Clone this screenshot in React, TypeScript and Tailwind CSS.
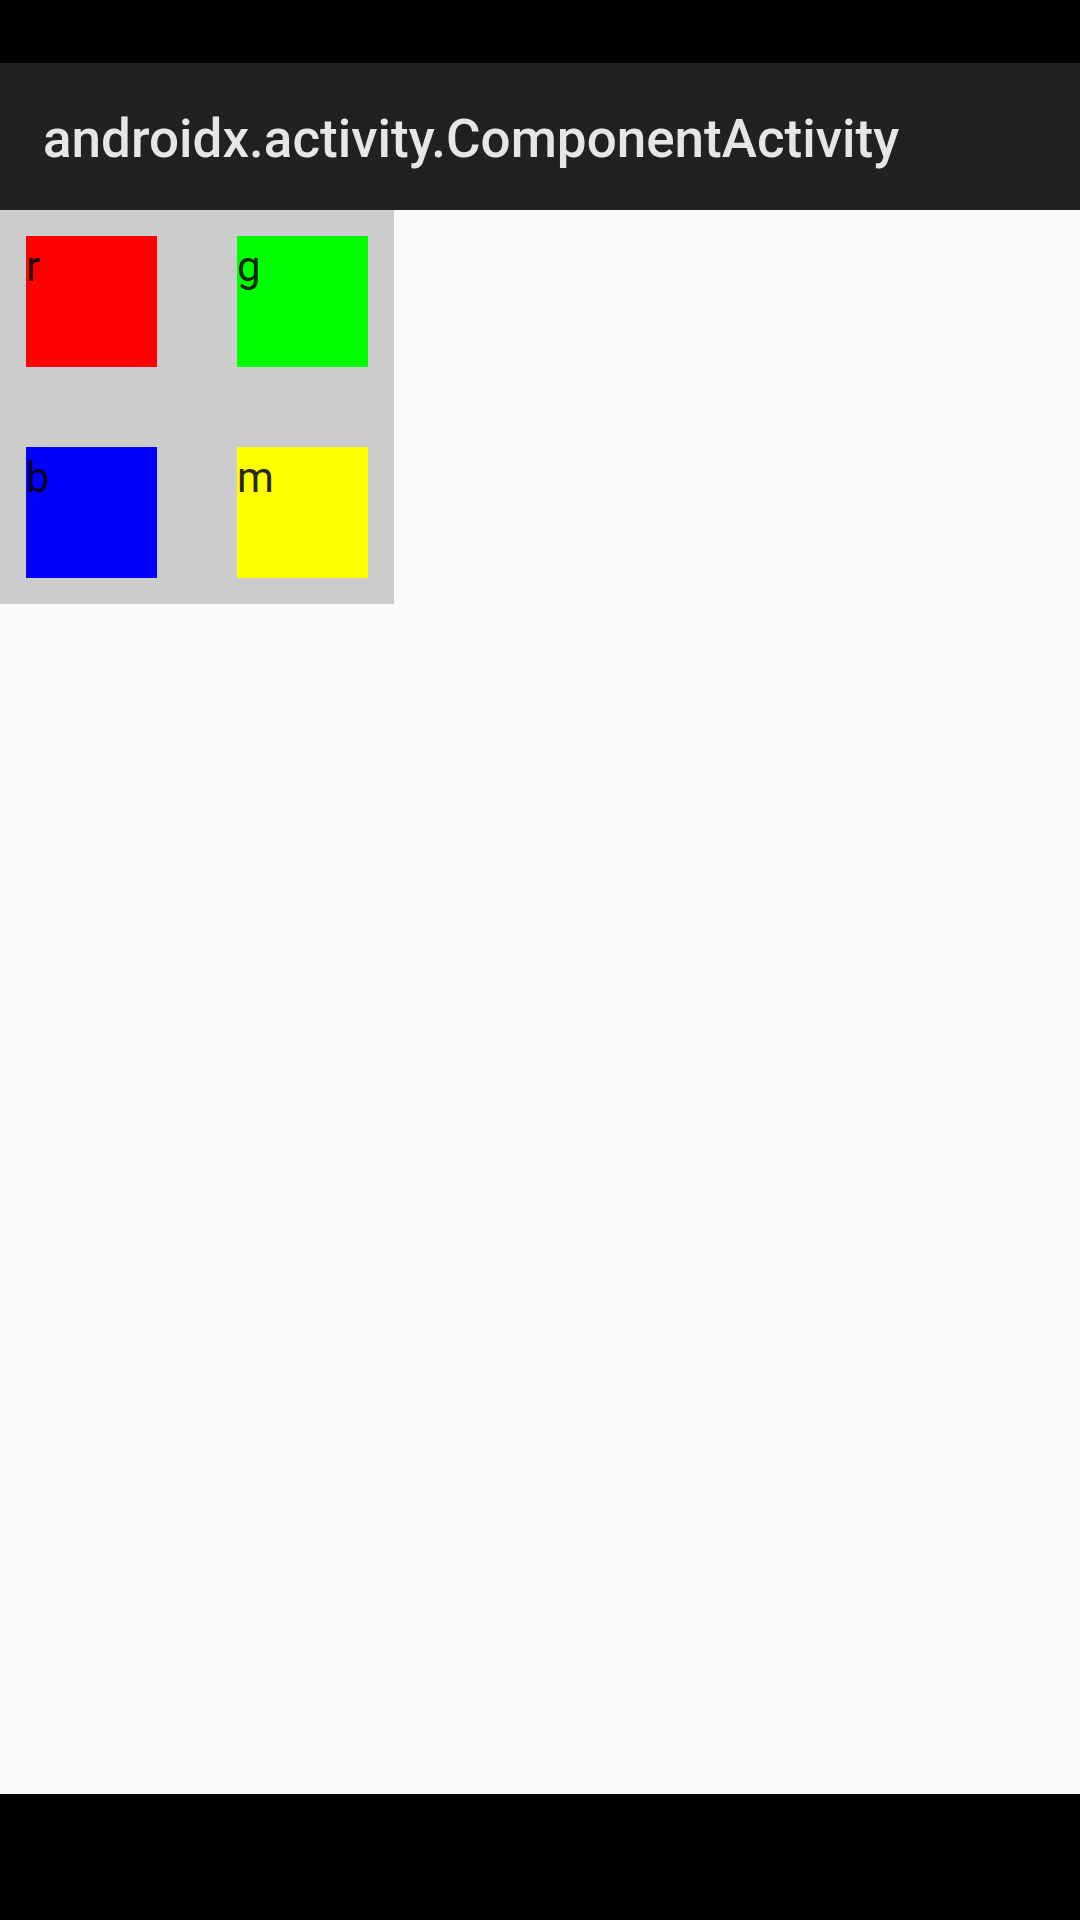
const cells = [
  { label: "r", color: "bg-[#ff0000]" },
  { label: "g", color: "bg-[#00ff00]" },
  { label: "b", color: "bg-[#0000ff]" },
  { label: "m", color: "bg-[#ffff00]" },
];

export default function App() {
  return (
    <div className="flex flex-col w-[1080px] h-[1920px] bg-[#fafafa] font-['Roboto',sans-serif]">
      {/* status bar */}
      <div className="h-[63px] bg-black shrink-0" />

      {/* toolbar */}
      <div className="h-[147px] shrink-0 bg-[#212121] flex items-center px-[43px] pt-[5px]">
        <span className="text-[53px] font-medium text-[#e6e6e6] leading-none">
          androidx.activity.ComponentActivity
        </span>
      </div>

      {/* content */}
      <div className="flex-1">
        <div className="inline-grid grid-cols-[131px_131px] gap-[80px] p-[26px] bg-[#cccccc]">
          {cells.map((c) => (
            <div key={c.label} className={`w-[131px] h-[131px] ${c.color}`}>
              <span className="block text-[42px] leading-[61px] text-black/[0.87]">{c.label}</span>
            </div>
          ))}
        </div>
      </div>

      {/* nav bar */}
      <div className="h-[126px] bg-black shrink-0" />
    </div>
  );
}
